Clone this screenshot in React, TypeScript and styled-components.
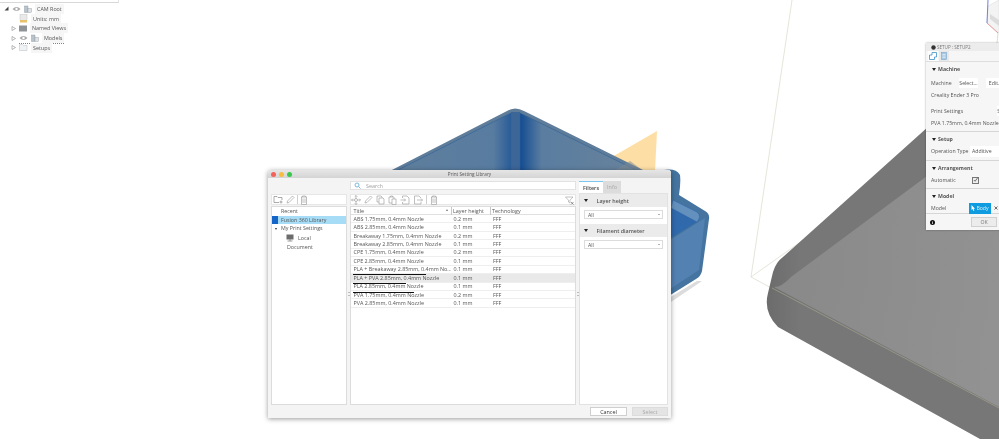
import React from 'react';
import styled, {createGlobalStyle} from 'styled-components';

const GlobalStyle = createGlobalStyle`
  html, body {
    margin: 0;
    padding: 0;
    background: #fff;
  }
  body {
    font-family: "Open Sans", "Liberation Sans", sans-serif;
    color: #4a4a4a;
  }
`;

const presets = [
  {title: 'ABS 1.75mm, 0.4mm Nozzle', layer: '0.2 mm'},
  {title: 'ABS 2.85mm, 0.4mm Nozzle', layer: '0.1 mm'},
  {title: 'Breakaway 1.75mm, 0.4mm Nozzle', layer: '0.2 mm'},
  {title: 'Breakaway 2.85mm, 0.4mm Nozzle', layer: '0.1 mm'},
  {title: 'CPE 1.75mm, 0.4mm Nozzle', layer: '0.2 mm'},
  {title: 'CPE 2.85mm, 0.4mm Nozzle', layer: '0.1 mm'},
  {title: 'PLA + Breakaway 2.85mm, 0.4mm No...', layer: '0.1 mm'},
  {title: 'PLA + PVA 2.85mm, 0.4mm Nozzle', layer: '0.1 mm', selected: true},
  {title: 'PLA 2.85mm, 0.4mm Nozzle', layer: '0.1 mm'},
  {title: 'PVA 1.75mm, 0.4mm Nozzle', layer: '0.2 mm'},
  {title: 'PVA 2.85mm, 0.4mm Nozzle', layer: '0.1 mm'},
];

const Scene = () => (
  <SceneSvg viewBox='0 0 999 439'>
    <defs>
      <linearGradient id='wallLeft' gradientUnits='userSpaceOnUse' x1='394' y1='0' x2='511' y2='0'>
        <stop offset='0' stopColor='#5f7e9c'/>
        <stop offset='0.85' stopColor='#587ca0'/>
        <stop offset='1' stopColor='#2a5c98'/>
      </linearGradient>
      <linearGradient id='wallRight' gradientUnits='userSpaceOnUse' x1='520' y1='0' x2='640' y2='0'>
        <stop offset='0' stopColor='#124c92'/>
        <stop offset='0.18' stopColor='#5a7da0'/>
        <stop offset='1' stopColor='#68829b'/>
      </linearGradient>
      <linearGradient id='plateSide' gradientUnits='userSpaceOnUse' x1='767' y1='0' x2='800' y2='0'>
        <stop offset='0' stopColor='#6c6c6c'/>
        <stop offset='1' stopColor='#777777'/>
      </linearGradient>
      <linearGradient id='plateFace' gradientUnits='userSpaceOnUse' x1='780' y1='280' x2='999' y2='300'>
        <stop offset='0' stopColor='#898989'/>
        <stop offset='1' stopColor='#929292'/>
      </linearGradient>
    </defs>

    <polygon points='657,131 612,157 610,172 655,172' fill='#fddfa6'/>
    <path d='M388,172 L507,111 Q515,106 524,111 L647,172 Z' fill='#5f7c99'/>
    <path d='M394,172 L511,113 L511,172 Z' fill='url(#wallLeft)'/>
    <path d='M520,113 L640,172 L520,172 Z' fill='url(#wallRight)'/>
    <rect x='511' y='112' width='9' height='60' fill='#3c6598'/>
    <path d='M394,172 L511,113 V172 M520,172 V113 L640,172' fill='none' stroke='#2f6199' strokeWidth='0.6'/>
    <path d='M645,172 L612,172 L630,161 Z' fill='#7d8a93' opacity='0.55'/>

    <path d='M664,170 Q676,168 680,175 Q681,182 679,195 L705,211 Q710,214 709,219 L702,271 Q701,276 696,279 L664,299 Z' fill='#44749f'/>
    <path d='M664,204 L697,222 L664,242 Z' fill='#3069ac'/>
    <path d='M673,200 L697,212 Q702,216 697,222 L671,208 Z' fill='#6390bd' stroke='#2a62aa' strokeWidth='0.5'/>
    <path d='M664,244 L705,218 L699,270 L664,293 Z' fill='#5381b2'/>
    <path d='M664,301 L697,281 L702,281 L668,304 Z' fill='#dcdcdc'/>

    <path d='M792,0 L751,277 L926,153' fill='none' stroke='#deded0' strokeWidth='0.8'/>
    <path d='M751,277 L775,290' fill='none' stroke='#deded0' strokeWidth='0.8'/>
    <path d='M783,257 Q776,262 773,272 L768,293 Q763,312 778,327 L980,439 L999,439 L999,100 L958,100 Z' fill='url(#plateSide)'/>
    <path d='M774,287 Q782,287 791,277 L927,176 L999,110 L999,407 Z' fill='url(#plateFace)'/>
    <path d='M772,288 L999,408' fill='none' stroke='#a5a38e' strokeWidth='0.7'/>

    <path d='M988,6 L999,0 L999,33 L987,23 Z' fill='#f3f3f3' stroke='#d8d8d8' strokeWidth='0.5'/>
    <path d='M990,14 L999,20 L999,26 L990,19 Z' fill='#dcdcdc'/>
    <path d='M988,0 L987,23' stroke='#7480d8' strokeWidth='1'/>
    <path d='M987,23 L998,33' stroke='#e39a9a' strokeWidth='1'/>
    <path d='M998,33 L997,43' stroke='#deded0' strokeWidth='1'/>
  </SceneSvg>
);

const TrashIcon = () => (
  <svg width='8' height='10' viewBox='0 0 8 10' fill='none' stroke='#a4a4a4' strokeWidth='0.7'>
    <path d='M1,2 H7 M2.5,2 V1 H5.5 V2 M1.5,2 V9.5 H6.5 V2 M3,3.5 V8 M5,3.5 V8'/>
  </svg>
);

const PencilIcon = () => (
  <svg width='9' height='9' viewBox='0 0 9 9' fill='none' stroke='#a4a4a4' strokeWidth='0.7'>
    <path d='M1,8 L1.5,6 L6.5,1 L8,2.5 L3,7.5 Z'/>
  </svg>
);

const FolderAddIcon = () => (
  <svg width='10' height='9' viewBox='0 0 10 9' fill='none' stroke='#888' strokeWidth='0.7'>
    <path d='M1,7.5 V1.5 H4 L5,2.5 H9 V5 M1,7.5 H6 M8,5.5 V8.5 M6.5,7 H9.5'/>
  </svg>
);

const MoveIcon = () => (
  <svg width='10' height='10' viewBox='0 0 10 10' fill='none' stroke='#a4a4a4' strokeWidth='0.7'>
    <path d='M5,0.5 V9.5 M0.5,5 H9.5 M3.7,1.8 L5,0.5 L6.3,1.8 M3.7,8.2 L5,9.5 L6.3,8.2 M1.8,3.7 L0.5,5 L1.8,6.3 M8.2,3.7 L9.5,5 L8.2,6.3'/>
    <circle cx='5' cy='5' r='1.5' fill='#fff'/>
  </svg>
);

const CopyIcon = () => (
  <svg width='9' height='10' viewBox='0 0 9 10' fill='#fff' stroke='#a4a4a4' strokeWidth='0.7'>
    <path d='M1,1 H5 L6,2 V7 H1 Z'/>
    <path d='M3,3 H7 L8,4 V9 H3 Z'/>
  </svg>
);

const PasteIcon = () => (
  <svg width='9' height='10' viewBox='0 0 9 10' fill='#fff' stroke='#a4a4a4' strokeWidth='0.7'>
    <path d='M1,2 H6 V8 H1 Z M2.5,2 V1 H4.5 V2'/>
    <path d='M4,4 H8 V9.5 H4 Z'/>
  </svg>
);

const ImportIcon = () => (
  <svg width='10' height='10' viewBox='0 0 10 10' fill='none' stroke='#a4a4a4' strokeWidth='0.7'>
    <path d='M2.5,3 V1 H7 L9,3 V9 H2.5 V7 M0.5,5 H5.5 M4,3.5 L5.5,5 L4,6.5'/>
  </svg>
);

const ExportIcon = () => (
  <svg width='10' height='10' viewBox='0 0 10 10' fill='none' stroke='#a4a4a4' strokeWidth='0.7'>
    <path d='M8,3 L6,1 H1.5 V9 H8 V7 M4,5 H9.5 M8,3.5 L9.5,5 L8,6.5'/>
  </svg>
);

const FilterClearIcon = () => (
  <svg width='9' height='9' viewBox='0 0 9 9' fill='none' stroke='#9a9a9a' strokeWidth='0.6'>
    <path d='M0.5,1 H8 L5,4.2 V7 L3.5,6 V4.2 Z'/>
    <path d='M6,6 L8.5,8.5 M8.5,6 L6,8.5' stroke='#555'/>
  </svg>
);

const SearchIcon = () => (
  <svg width='7' height='7' viewBox='0 0 7 7' fill='none' stroke='#6fb2d8' strokeWidth='0.9'>
    <circle cx='3' cy='3' r='2'/>
    <path d='M4.5,4.5 L6.5,6.5'/>
  </svg>
);

const MonitorIcon = () => (
  <svg width='8' height='8' viewBox='0 0 8 8'>
    <rect x='0.5' y='0.5' width='7' height='5' fill='#6c6c6c'/>
    <rect x='3' y='5.5' width='2' height='1' fill='#8a8a8a'/>
    <rect x='1.5' y='6.5' width='5' height='1' fill='#9a9a9a'/>
  </svg>
);

const EyeIcon = () => (
  <svg width='9' height='6' viewBox='0 0 9 6'>
    <path d='M0.5,3 Q4.5,-1 8.5,3 Q4.5,7 0.5,3 Z' fill='#a9a9a9'/>
    <circle cx='4.5' cy='3' r='1.2' fill='#fff'/>
  </svg>
);

const ComponentIcon = () => (
  <svg width='8' height='8' viewBox='0 0 8 8'>
    <rect x='0.5' y='1' width='3.5' height='6.5' fill='#b9c3cc' stroke='#8a949c' strokeWidth='0.4'/>
    <rect x='4' y='3.5' width='3.5' height='4' fill='#dfe3e6' stroke='#8a949c' strokeWidth='0.4'/>
  </svg>
);

const TreeArrow = ({open}: {open?: boolean}) => (
  <svg width='5' height='5' viewBox='0 0 5 5'>
    {open
      ? <path d='M4.5,0.5 V4.5 H0.5 Z' fill='#444'/>
      : <path d='M1,0.5 L4.5,2.5 L1,4.5 Z' fill='#fff' stroke='#8a8a8a' strokeWidth='0.6'/>}
  </svg>
);

const Caret = () => (
  <svg width='4' height='3' viewBox='0 0 4 3'><path d='M0,0 H4 L2,3 Z' fill='#222'/></svg>
);

const BrowserTree = () => (
  <Tree>
    <TreeTopLine/>
    <TreeRow $indent={4}>
      <TreeArrow open/><EyeIcon/><ComponentIcon/><TreeLabel>CAM Root</TreeLabel>
    </TreeRow>
    <TreeRow $indent={19}>
      <svg width='9' height='9' viewBox='0 0 9 9'>
        <rect x='1' y='0.5' width='7' height='6' fill='#e9e9e9' stroke='#bbb' strokeWidth='0.4'/>
        <rect x='1' y='6' width='7' height='2.5' fill='#e8c26a'/>
      </svg>
      <TreeLabel>Units: mm</TreeLabel>
    </TreeRow>
    <TreeRow $indent={11}>
      <TreeArrow/>
      <svg width='8' height='7' viewBox='0 0 8 7'>
        <rect x='0' y='0.5' width='8' height='6' fill='#8f9396'/>
      </svg>
      <TreeLabel>Named Views</TreeLabel>
    </TreeRow>
    <TreeRow $indent={11}>
      <TreeArrow/>
      <ModelGroup>
        <EyeIcon/><ComponentIcon/><TreeLabel>Models</TreeLabel>
      </ModelGroup>
    </TreeRow>
    <TreeRow $indent={11}>
      <TreeArrow/>
      <svg width='9' height='7' viewBox='0 0 9 7' fill='#f0f2f4' stroke='#b4bcc4' strokeWidth='0.5'>
        <path d='M0.5,6.5 V0.5 H3.5 L4.5,1.5 H8 V6.5 Z'/>
      </svg>
      <TreeLabel>Setups</TreeLabel>
    </TreeRow>
  </Tree>
);

const SetupPanel = () => (
  <Panel>
    <PanelTitle>
      <svg width='5' height='5' viewBox='0 0 5 5'><circle cx='2.5' cy='2.5' r='2.2' fill='#333'/></svg>
      SETUP : SETUP2
    </PanelTitle>
    <PanelTabs>
      <PanelTab $active>
        <svg width='8' height='8' viewBox='0 0 8 8' fill='#fff' stroke='#3f8fc9' strokeWidth='0.8'>
          <path d='M3,0.5 H7.5 V5 H5.5 V7.5 H0.5 V3 H3 Z'/>
        </svg>
      </PanelTab>
      <PanelTab>
        <svg width='6' height='8' viewBox='0 0 6 8'>
          <rect x='0.5' y='0.5' width='5' height='7' fill='#a9c8e4' stroke='#6a9cc8' strokeWidth='0.5'/>
          <path d='M1.5,2.5 H4.5 M1.5,4 H4.5 M1.5,5.5 H4.5' stroke='#fff' strokeWidth='0.5'/>
        </svg>
      </PanelTab>
    </PanelTabs>
    <PanelSection $height={70}>
      <SectionTitle><Caret/>Machine</SectionTitle>
      <PanelRow $top={5}>
        <PanelLabel $width={25}>Machine</PanelLabel>
        <PanelButton>Select...</PanelButton>
        <PanelButton $left={5}>Edit...</PanelButton>
      </PanelRow>
      <PanelText>Creality Ender 3 Pro</PanelText>
      <PanelRow $top={7.5}>
        <PanelLabel $width={63}>Print Settings</PanelLabel>
        <PanelButton>Select...</PanelButton>
      </PanelRow>
      <PanelText>PVA 1.75mm, 0.4mm Nozzle</PanelText>
    </PanelSection>
    <PanelSection $height={29}>
      <SectionTitle><Caret/>Setup</SectionTitle>
      <PanelRow>
        <PanelLabel $width={36}>Operation Type</PanelLabel>
        <PanelField>Additive</PanelField>
      </PanelRow>
    </PanelSection>
    <PanelSection $height={28}>
      <SectionTitle><Caret/>Arrangement</SectionTitle>
      <PanelRow>
        <PanelLabel $width={38}>Automatic</PanelLabel>
        <Check>
          <svg width='6' height='6' viewBox='0 0 6 6' fill='none' stroke='#333' strokeWidth='0.8'>
            <path d='M1,3 L2.5,4.5 L5.5,0.5'/>
          </svg>
        </Check>
      </PanelRow>
    </PanelSection>
    <PanelSection $height={25}>
      <SectionTitle><Caret/>Model</SectionTitle>
      <PanelRow>
        <PanelLabel $width={35}>Model</PanelLabel>
        <BodyButton>
          <svg width='4' height='6' viewBox='0 0 4 6'><path d='M0.5,0 V5 L1.6,4 L2.5,6 L3.3,5.6 L2.5,3.8 H4 Z' fill='#fff'/></svg>
          Body
        </BodyButton>
        <svg width='4' height='4' viewBox='0 0 4 4' stroke='#333' strokeWidth='0.7'>
          <path d='M0.5,0.5 L3.5,3.5 M3.5,0.5 L0.5,3.5'/>
        </svg>
      </PanelRow>
    </PanelSection>
    <PanelFooter>
      <InfoDot>i</InfoDot>
      <OkButton>OK</OkButton>
    </PanelFooter>
  </Panel>
);

const LibraryDialog = () => (
  <Dialog>
    <TitleBar>
      <Lights>
        <Light $color='#f5605a'/>
        <Light $color='#f7bd3f'/>
        <Light $color='#38c94a'/>
      </Lights>
      <WindowTitle>Print Setting Library</WindowTitle>
    </TitleBar>
    <DialogBody>
      <Grip $left={80}/>
      <Grip $left={309}/>
      <LeftColumn>
        <LeftToolBar>
          <FolderAddIcon/><PencilIcon/><ToolDivider/><TrashIcon/>
        </LeftToolBar>
        <LibraryList>
          <LibraryItem>Recent</LibraryItem>
          <LibraryItem $active>Fusion 360 Library</LibraryItem>
          <LibraryItem $bullet>My Print Settings</LibraryItem>
          <LocalItem><MonitorIcon/>Local</LocalItem>
          <DocumentItem>Document</DocumentItem>
        </LibraryList>
      </LeftColumn>
      <CenterColumn>
        <SearchBox><SearchIcon/>Search</SearchBox>
        <ToolBar>
          <MoveIcon/><PencilIcon/><CopyIcon/><PasteIcon/><ImportIcon/><ExportIcon/><ToolDivider/><TrashIcon/>
          <FilterButton><FilterClearIcon/></FilterButton>
        </ToolBar>
        <TableBox>
          <HeaderRow>
            <TitleCell>Title<SortMark>▴</SortMark></TitleCell>
            <LayerCell $head>Layer height</LayerCell>
            <TechCell $head>Technology</TechCell>
          </HeaderRow>
          {presets.map((preset) => (
            <Row key={preset.title} $selected={preset.selected}>
              <TitleCell>{preset.title}</TitleCell>
              <LayerCell>{preset.layer}</LayerCell>
              <TechCell>FFF</TechCell>
            </Row>
          ))}
          <Strike $top={66.5} $width={73}/>
          <Strike $top={76} $width={53}/>
          <Strike $top={85} $width={61}/>
        </TableBox>
      </CenterColumn>
      <RightColumn>
        <Tabs>
          <Tab $active>Filters</Tab>
          <Tab>Info</Tab>
        </Tabs>
        <FilterBox>
          <FilterHead><Caret/>Layer height</FilterHead>
          <FilterSelect>All<SelectCaret/></FilterSelect>
          <FilterHead $top={5}><Caret/>Filament diameter</FilterHead>
          <FilterSelect>All<SelectCaret/></FilterSelect>
        </FilterBox>
      </RightColumn>
    </DialogBody>
    <DialogFooter>
      <CancelButton>Cancel</CancelButton>
      <SelectButton>Select</SelectButton>
    </DialogFooter>
  </Dialog>
);

const App = () => (
  <Page>
    <GlobalStyle/>
    <Scene/>
    <BrowserTree/>
    <SetupPanel/>
    <LibraryDialog/>
  </Page>
);

export default App;

const Page = styled.div`
  position: relative;
  width: 999px;
  height: 439px;
  overflow: hidden;
  background: #fff;
  filter: blur(0.3px);
`;

const SceneSvg = styled.svg`
  position: absolute;
  inset: 0;
  width: 999px;
  height: 439px;
`;

const Tree = styled.div`
  position: absolute;
  left: 0;
  top: 0;
  width: 118px;
  display: flex;
  flex-direction: column;
`;

const TreeTopLine = styled.div`
  width: 118px;
  margin-bottom: 1px;
  height: 2px;
  border-bottom: 1px solid #d8d8d8;
  border-right: 1px solid #e4e4e4;
`;

const TreeRow = styled.div<{$indent: number}>`
  display: flex;
  align-items: center;
  gap: 3px;
  height: 9.75px;
  padding-left: ${(props) => props.$indent}px;
`;

const ModelGroup = styled.div`
  display: flex;
  align-items: center;
  gap: 3px;
  border-bottom: 0.5px dotted #5f86c8;
`;

const TreeLabel = styled.span`
  font-size: 5.4px;
  padding: 1px 2px;
  background: #f6f6f6;
  color: #555;
  white-space: nowrap;
`;

const Panel = styled.div`
  position: absolute;
  left: 926px;
  top: 43px;
  width: 78px;
  height: 187px;
  display: flex;
  flex-direction: column;
  background: #f6f6f6;
  box-shadow: 0 0 2px rgba(0, 0, 0, 0.35);
  font-size: 5.2px;
`;

const PanelTitle = styled.div`
  height: 8px;
  display: flex;
  align-items: center;
  gap: 1px;
  padding-left: 5px;
  background: #ececec;
  color: #777;
  font-size: 4.6px;
`;

const PanelTabs = styled.div`
  height: 10px;
  display: flex;
  gap: 1px;
  padding-left: 2px;
  border-bottom: 1px solid #ddd;
`;

const PanelTab = styled.div<{$active?: boolean}>`
  width: 10px;
  display: flex;
  align-items: center;
  justify-content: center;
  background: ${(props) => props.$active ? '#fff' : '#e8e8e8'};
`;

const PanelSection = styled.div<{$height: number}>`
  height: ${(props) => props.$height}px;
  box-sizing: border-box;
  padding: 3px 0 0 5px;
  border-bottom: 1px solid #d6d6d6;
  flex-shrink: 0;
`;

const SectionTitle = styled.div`
  display: flex;
  align-items: center;
  gap: 2px;
  height: 8px;
  margin-left: 1px;
  font-weight: 700;
  color: #555;
`;

const PanelRow = styled.div<{$top?: number}>`
  display: flex;
  align-items: center;
  gap: 3px;
  height: 10px;
  margin-top: ${(props) => props.$top ?? 3}px;
`;

const PanelLabel = styled.span<{$width: number}>`
  width: ${(props) => props.$width}px;
  flex-shrink: 0;
  color: #555;
  white-space: nowrap;
`;

const PanelText = styled.div`
  margin-top: 2.5px;
  color: #555;
  white-space: nowrap;
`;

const PanelButton = styled.div<{$left?: number}>`
  flex-shrink: 0;
  width: 19px;
  height: 10px;
  margin-left: ${(props) => props.$left ?? 0}px;
  line-height: 10px;
  text-align: center;
  background: #fff;
  color: #555;
`;

const PanelField = styled.div`
  flex-shrink: 0;
  width: 40px;
  height: 11px;
  line-height: 11px;
  padding-left: 2px;
  background: #fff;
  color: #555;
`;

const Check = styled.div`
  width: 5px;
  height: 5px;
  display: flex;
  align-items: center;
  justify-content: center;
  border: 0.5px solid #777;
  background: #eee;
`;

const BodyButton = styled.div`
  flex-shrink: 0;
  width: 22px;
  height: 11px;
  display: flex;
  align-items: center;
  justify-content: center;
  gap: 1px;
  background: #0f9be0;
  color: #d8f0fb;
`;

const PanelFooter = styled.div`
  flex: 1;
  display: flex;
  align-items: center;
  justify-content: space-between;
  padding: 0 7px 0 4px;
`;

const InfoDot = styled.div`
  width: 5px;
  height: 5px;
  border-radius: 50%;
  background: #111;
  color: #fff;
  font: 700 4px/5px "Liberation Serif", serif;
  text-align: center;
`;

const OkButton = styled.div`
  width: 24px;
  height: 8px;
  line-height: 8px;
  text-align: center;
  background: #ececec;
  border: 0.5px solid #d0d0d0;
  color: #777;
`;

const Dialog = styled.div`
  position: absolute;
  left: 268px;
  top: 170px;
  width: 403px;
  height: 248px;
  display: flex;
  flex-direction: column;
  background: #f4f4f4;
  border-radius: 3px 3px 0 0;
  box-shadow: 0 1px 5px rgba(0, 0, 0, 0.4);
`;

const TitleBar = styled.div`
  position: relative;
  height: 8px;
  flex-shrink: 0;
  display: flex;
  align-items: center;
  justify-content: center;
  background: linear-gradient(#e6e6e6, #d4d4d4);
  border-radius: 3px 3px 0 0;
`;

const Lights = styled.div`
  position: absolute;
  left: 3px;
  top: 1.5px;
  display: flex;
  gap: 3px;
`;

const Light = styled.div<{$color: string}>`
  width: 5px;
  height: 5px;
  border-radius: 50%;
  background: ${(props) => props.$color};
`;

const WindowTitle = styled.span`
  font-size: 4.7px;
  color: #555;
`;

const DialogBody = styled.div`
  position: relative;
  display: grid;
  grid-template-columns: 76px 226px 89px;
  gap: 3px;
  padding: 3px 3px 0;
  flex: 1;
  min-height: 0;
`;

const Grip = styled.div<{$left: number}>`
  position: absolute;
  left: ${(props) => props.$left}px;
  top: 114px;
  width: 2px;
  height: 1.5px;
  border-top: 0.5px solid #bcbcbc;
  border-bottom: 0.5px solid #bcbcbc;
`;

const LeftColumn = styled.div`
  display: flex;
  flex-direction: column;
  padding-top: 13px;
`;

const CenterColumn = styled.div`
  display: flex;
  flex-direction: column;
`;

const RightColumn = styled.div`
  display: flex;
  flex-direction: column;
`;

const SearchBox = styled.div`
  height: 9px;
  margin-bottom: 4px;
  display: flex;
  align-items: center;
  gap: 5px;
  padding-left: 3px;
  background: #fff;
  border: 0.5px solid #e2e2e2;
  box-sizing: border-box;
  color: #a0a0a0;
  font-size: 5.4px;
`;

const ToolBar = styled.div`
  height: 11px;
  margin-bottom: 1px;
  display: flex;
  align-items: center;
  gap: 3px;
  background: #fff;
  border: 0.5px solid #e6e6e6;
  box-sizing: border-box;
`;

const LeftToolBar = styled(ToolBar)`
  gap: 2.5px;
  padding-left: 1px;
`;

const ToolDivider = styled.div`
  width: 0.5px;
  height: 9px;
  background: #cfcfcf;
`;

const FilterButton = styled.div`
  display: flex;
  margin-left: auto;
  margin-right: 1px;
  margin-top: 1px;
`;

const LibraryList = styled.div`
  flex: 1;
  background: #fff;
  border: 0.5px solid #dcdcdc;
  box-sizing: border-box;
  font-size: 5.3px;
  color: #555;
`;

const LibraryItem = styled.div<{$active?: boolean; $bullet?: boolean}>`
  position: relative;
  height: 8.5px;
  line-height: 8.5px;
  background: ${(props) => props.$active ? '#a6dcf5' : 'transparent'};
  border-left: ${(props) => props.$active ? '6px solid #1565c8' : 'none'};
  padding-left: ${(props) => props.$active ? '3px' : '9px'};

  ${(props) => props.$bullet ? `
    &::before {
      content: '';
      position: absolute;
      left: 3px;
      top: 3.5px;
      border-left: 1px solid transparent;
      border-right: 1px solid transparent;
      border-top: 2px solid #333;
    }
  ` : ''}
`;

const LocalItem = styled.div`
  display: flex;
  align-items: center;
  gap: 4px;
  height: 10px;
  padding-left: 14px;
`;

const DocumentItem = styled.div`
  height: 8px;
  line-height: 8px;
  padding-left: 15px;
`;

const TableBox = styled.div`
  position: relative;
  flex: 1;
  background: #fff;
  border: 0.5px solid #dcdcdc;
  box-sizing: border-box;
  font-size: 5.4px;
  color: #555;
`;

const Row = styled.div<{$selected?: boolean}>`
  display: flex;
  align-items: center;
  height: 8.45px;
  box-sizing: border-box;
  background: ${(props) => props.$selected ? '#e9e9e9' : '#fff'};
  border-bottom: 0.5px solid #eeeeee;
`;

const HeaderRow = styled(Row)`
  height: 8px;
  border-bottom: 0.5px solid #e0e0e0;
`;

const TitleCell = styled.div`
  width: 100px;
  padding-left: 2.5px;
  display: flex;
  justify-content: space-between;
  box-sizing: border-box;
  white-space: nowrap;
  overflow: hidden;
`;

const SortMark = styled.span`
  color: #777;
  font-size: 4px;
  padding-right: 3px;
`;

const LayerCell = styled.div<{$head?: boolean}>`
  width: 39px;
  padding-left: ${(props) => props.$head ? 1 : 2.5}px;
  box-sizing: border-box;
  border-left: ${(props) => props.$head ? '0.5px solid #c8c8c8' : 'none'};
`;

const TechCell = styled.div<{$head?: boolean}>`
  padding-left: ${(props) => props.$head ? 1 : 3}px;
  border-left: ${(props) => props.$head ? '0.5px solid #c8c8c8' : 'none'};
`;

const Strike = styled.div<{$top: number; $width: number}>`
  position: absolute;
  left: 2px;
  top: ${(props) => props.$top}px;
  width: ${(props) => props.$width}px;
  height: 1px;
  background: #111;
`;

const Tabs = styled.div`
  height: 12px;
  display: flex;
  font-size: 5.4px;
`;

const Tab = styled.div<{$active?: boolean}>`
  padding: 0 4px;
  display: flex;
  align-items: center;
  background: ${(props) => props.$active ? '#fff' : '#dcdcdc'};
  border-top: ${(props) => props.$active ? '0.5px solid #7cc7ee' : 'none'};
  color: ${(props) => props.$active ? '#444' : '#a8a8a8'};
  font-weight: ${(props) => props.$active ? 600 : 400};
`;

const FilterBox = styled.div`
  flex: 1;
  background: #fff;
  border: 0.5px solid #e2e2e2;
  box-sizing: border-box;
`;

const FilterHead = styled.div<{$top?: number}>`
  height: 13px;
  margin-top: ${(props) => props.$top ?? 0}px;
  display: flex;
  align-items: center;
  gap: 8.5px;
  padding-left: 4px;
  background: #ebebeb;
  color: #555;
  font-size: 5.4px;
  font-weight: 600;
`;

const FilterSelect = styled.div`
  height: 9px;
  margin: 3px 4px 0;
  display: flex;
  align-items: center;
  justify-content: space-between;
  padding: 0 2px 0 3px;
  background: #fff;
  border: 0.5px solid #dcdcdc;
  box-sizing: border-box;
  color: #555;
  font-size: 5.2px;
`;

const SelectCaret = styled.span`
  border-left: 1px solid transparent;
  border-right: 1px solid transparent;
  border-top: 1.5px solid #666;
`;

const DialogFooter = styled.div`
  height: 13px;
  flex-shrink: 0;
  display: flex;
  justify-content: flex-end;
  align-items: center;
  gap: 5px;
  padding-right: 3px;
`;

const CancelButton = styled.div`
  width: 37px;
  height: 8.5px;
  line-height: 8.5px;
  text-align: center;
  background: #fff;
  border: 0.5px solid #cfcfcf;
  box-sizing: border-box;
  color: #333;
  font-size: 5.4px;
`;

const SelectButton = styled(CancelButton)`
  width: 36px;
  background: #e4e4e4;
  border-color: #dcdcdc;
  color: #aaa;
`;
